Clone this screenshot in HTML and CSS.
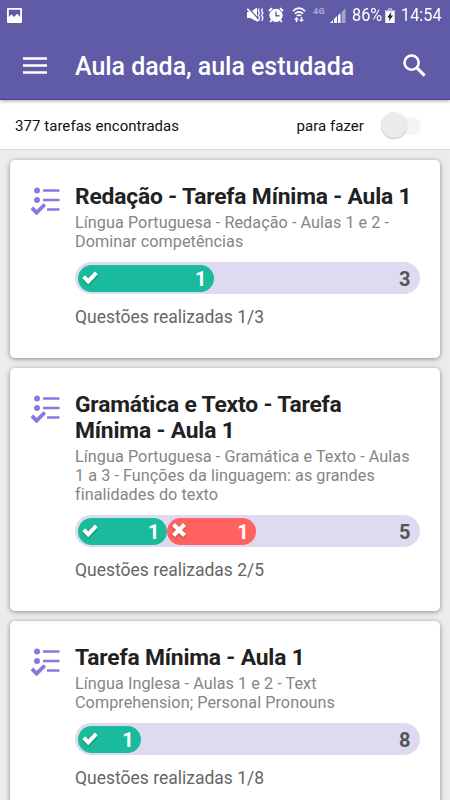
FILE: index.html
```html
<!DOCTYPE html>
<html lang="pt-BR">
<head>
<meta charset="UTF-8">
<meta name="viewport" content="width=device-width, initial-scale=1.0">
<title>Aula dada, aula estudada</title>
<link rel="stylesheet" href="styles.css">
</head>
<body>
<svg class="defs" aria-hidden="true">
  <symbol id="tasks" viewBox="0 0 30 28">
    <circle cx="7" cy="3.5" r="3"/>
    <circle cx="7" cy="13" r="3"/>
    <path d="M13 3.5h16.5M13 13h16.5M17 22.5h12.5" fill="none" stroke="currentColor" stroke-width="2.4"/>
    <path d="M1.9 20.9l4.7 4.8 8.2-8.2" fill="none" stroke="currentColor" stroke-width="3.8"/>
  </symbol>
  <symbol id="check" viewBox="0 0 16 14">
    <path d="M1.7 6.7l4.5 4.7 8.1-8.5" fill="none" stroke="currentColor" stroke-width="4"/>
  </symbol>
  <symbol id="cross" viewBox="0 0 16 14">
    <path d="M2.5 1.5l11 11M13.5 1.5l-11 11" fill="none" stroke="currentColor" stroke-width="4.2"/>
  </symbol>
</svg>

<header>
  <div class="statusBar">
    <svg class="picture" viewBox="0 0 15 15"><path fill-rule="evenodd" d="M1 0h13a1 1 0 0 1 1 1v13a1 1 0 0 1-1 1H1a1 1 0 0 1-1-1V1a1 1 0 0 1 1-1zm.8 1.8V9l2.7-2.8L7 9l3.2-3.2 3 3.2V1.8z"/></svg>
    <svg class="mute" viewBox="0 0 17 16"><path d="M0 5h3.3L10 .5v14L3.3 11H0z"/><path d="M1.7 1l11 12.5" fill="none" stroke="#5f5ba7" stroke-width="1.2"/><path d="M.3 1.8l11 12.5" fill="none" stroke="#fff" stroke-width="1.6"/><path d="M12.2 1.5l-1 2.3 1.4 2.3-1.4 2.3 1.4 2.3-1 3M15.5 1.5l-1 2.3 1.4 2.3-1.4 2.3 1.4 2.3-1 3" fill="none" stroke="#fff" stroke-width="1.3"/></svg>
    <svg class="alarm" viewBox="0 0 16 16"><circle cx="8" cy="8.3" r="6.6"/><path d="M.9 4L4 1.2M15.1 4L12 1.2M3.8 13l-1.7 2M12.2 13l1.7 2" fill="none" stroke="#fff" stroke-width="1.8"/><path d="M8 4.5v4.3h3.5" fill="none" stroke="#5f5ba7" stroke-width="1.4"/></svg>
    <svg class="wifi" viewBox="0 0 14 16"><path d="M.8 4.2q6.2-6 12.4 0M2.9 6.7q4.1-3.8 8.2 0M4.8 9q2.2-2 4.4 0" fill="none" stroke="#fff" stroke-width="1.6"/><path d="M2 12.5l2.5-2.4L7 12.5H5.3V15H3.7v-2.5zM7 12.8h1.7v-2.5h1.6v2.5H12L9.5 15z"/></svg>
    <span class="network">4G</span>
    <svg class="signal" viewBox="0 0 16 15"><path d="M0 15l3-3v3zM4 15v-4l3-3v7zM8 15V7.5l2.5-2.5v10z"/><path d="M11.7 15V4L15.5.3V15z" opacity=".45"/></svg>
    <span class="battery">86%</span>
    <svg class="cell" viewBox="0 0 10 16"><path d="M3 0h4v2h3v14H0V2h3z"/><path d="M3 0h4v2h3v1.5H0V2h3z" fill="#a8a6cf"/><path d="M6.5 4L2 10h2.5L3.8 14 8.2 8H5.7z" fill="#222"/></svg>
    <span class="clock">14:54</span>
  </div>
  <div class="toolbar">
    <svg class="menu" viewBox="0 0 24 17"><path d="M0 1.5h24M0 8.5h24M0 15.5h24" fill="none" stroke="#fff" stroke-width="2.3"/></svg>
    <h1>Aula dada, aula estudada</h1>
    <svg class="search" viewBox="0 0 23 23"><circle cx="8.6" cy="8.6" r="7.1" fill="none" stroke="#fff" stroke-width="2.6"/><path d="M13.6 13.6l8 8" fill="none" stroke="#fff" stroke-width="3"/></svg>
  </div>
</header>

<div class="filter">
  <span>377 tarefas encontradas</span>
  <label for="todo">para fazer</label>
  <span class="switch"><input type="checkbox" id="todo"><span class="slider"></span></span>
</div>

<main>
  <article class="card">
    <svg class="taskIcon"><use href="#tasks"/></svg>
    <div class="cardBody">
      <h2>Redação - Tarefa Mínima - Aula 1</h2>
      <p class="subject">Língua Portuguesa - Redação - Aulas 1 e 2 - Dominar competências</p>
      <div class="progress">
        <div class="part right" style="width:40%"><svg><use href="#check"/></svg><b>1</b></div>
        <b class="total">3</b>
      </div>
      <p class="done">Questões realizadas 1/3</p>
    </div>
  </article>

  <article class="card">
    <svg class="taskIcon"><use href="#tasks"/></svg>
    <div class="cardBody">
      <h2>Gramática e Texto - Tarefa Mínima - Aula 1</h2>
      <p class="subject">Língua Portuguesa - Gramática e Texto - Aulas 1 a 3 - Funções da linguagem: as grandes finalidades do texto</p>
      <div class="progress">
        <div class="part right" style="width:26.2%"><svg><use href="#check"/></svg><b>1</b></div>
        <div class="part wrong" style="width:26.2%"><svg><use href="#cross"/></svg><b>1</b></div>
        <b class="total">5</b>
      </div>
      <p class="done">Questões realizadas 2/5</p>
    </div>
  </article>

  <article class="card">
    <svg class="taskIcon"><use href="#tasks"/></svg>
    <div class="cardBody">
      <h2>Tarefa Mínima - Aula 1</h2>
      <p class="subject">Língua Inglesa - Aulas 1 e 2 - Text Comprehension; Personal Pronouns</p>
      <div class="progress">
        <div class="part right" style="width:18.6%"><svg><use href="#check"/></svg><b>1</b></div>
        <b class="total">8</b>
      </div>
      <p class="done">Questões realizadas 1/8</p>
    </div>
  </article>
</main>
</body>
</html>
```
FILE: styles.css
```css
* { box-sizing:border-box; }
html, body { margin:0; padding:0; height:100%; overflow:hidden; }
body { font-family:Roboto,sans-serif; background:#ececec; color:#212121; }
h1, h2, p { margin:0; }
svg { display:block; flex:none; fill:currentColor; }
.defs { position:absolute; width:0; height:0; }

header { position:relative; height:100px; background:#5f5ba7; color:#fff; border-bottom:1px solid #4a3fa0; box-shadow:0 1px 4px rgba(0,0,0,0.35); }
.statusBar { display:flex; align-items:center; height:30px; padding:0 8px 0 7px; }
.picture { width:15px; height:15px; margin-right:auto; }
.mute { width:17px; height:16px; }
.alarm { width:16px; height:16px; margin-left:4px; }
.wifi { width:14px; height:16px; margin-left:8px; }
.network { width:12px; margin:-9px 0 0 7px; font:bold 9px "Open Sans",sans-serif; color:#aaa8d3; }
.signal { width:16px; height:15px; margin-left:5px; }
.battery { width:29px; margin-left:6px; font-size:18.5px; }
.cell { width:10px; height:15px; margin-left:4px; }
.clock { width:41px; margin-left:6px; font-size:18.5px; }
.battery, .clock { white-space:nowrap; transform:scaleX(0.88); transform-origin:left; }
.toolbar { display:flex; align-items:center; height:70px; padding:0 24px 0 23px; }
.menu { width:24px; height:17px; }
.toolbar h1 { flex:1; margin:2px 0 0 28px; font-size:25px; font-weight:500; white-space:nowrap; letter-spacing:-0.05px; }
.search { width:23px; height:23px; }

.filter { display:flex; align-items:center; height:50px; padding:2px 29px 0 15px; background:#fff; border-bottom:1px solid #d9d9d9; font-size:15px; letter-spacing:0.05px; color:#111; }
.filter label { margin-left:auto; }
.switch { position:relative; width:39px; height:26px; margin-left:18px; }
.switch input { position:absolute; inset:0; margin:0; opacity:0; }
.slider { position:absolute; inset:4px 0 4px 4px; border-radius:9px; background:#f5f5f5; }
.slider:before { position:absolute; content:''; left:-5px; top:-5px; width:26px; height:26px; border-radius:50%; background:#ebebeb; box-shadow:0 1px 1px rgba(0,0,0,0.25); }

main { display:flex; flex-direction:column; gap:10px; padding:10px; }
.card { display:flex; padding:24px 20px 30px; background:#fff; border-radius:5px; box-shadow:0 1px 5px rgba(0,0,0,0.42); }
.taskIcon { width:30px; height:28px; margin:3px 15px 0 0; color:#857ae0; }
.cardBody { flex:1; min-width:0; }
.card h2 { font-size:22.8px; line-height:26px; font-weight:bold; letter-spacing:-0.17px; }
.subject { margin-top:3px; font-size:16.2px; line-height:19px; letter-spacing:0.06px; color:#858585; }
.progress { display:flex; align-items:center; height:32px; margin-top:11px; padding:0 2.5px; border-radius:16px; background:#dedbf0; font-size:20px; }
.part { display:flex; align-items:center; justify-content:space-between; height:27px; padding:0 7px 0 4px; border-radius:14px; color:#fff; }
.part svg { width:16px; height:14px; margin-bottom:2px; filter:drop-shadow(0 1px 1px rgba(0,0,0,0.3)); }
.part b, .total { line-height:24px; padding-top:2px; }
.right { background:#1abb9c; }
.wrong { background:#ff625f; }
.total { margin-left:auto; padding-right:7px; color:#555; }
.done { margin-top:12px; font-size:17.5px; line-height:22px; color:#666; }
```
